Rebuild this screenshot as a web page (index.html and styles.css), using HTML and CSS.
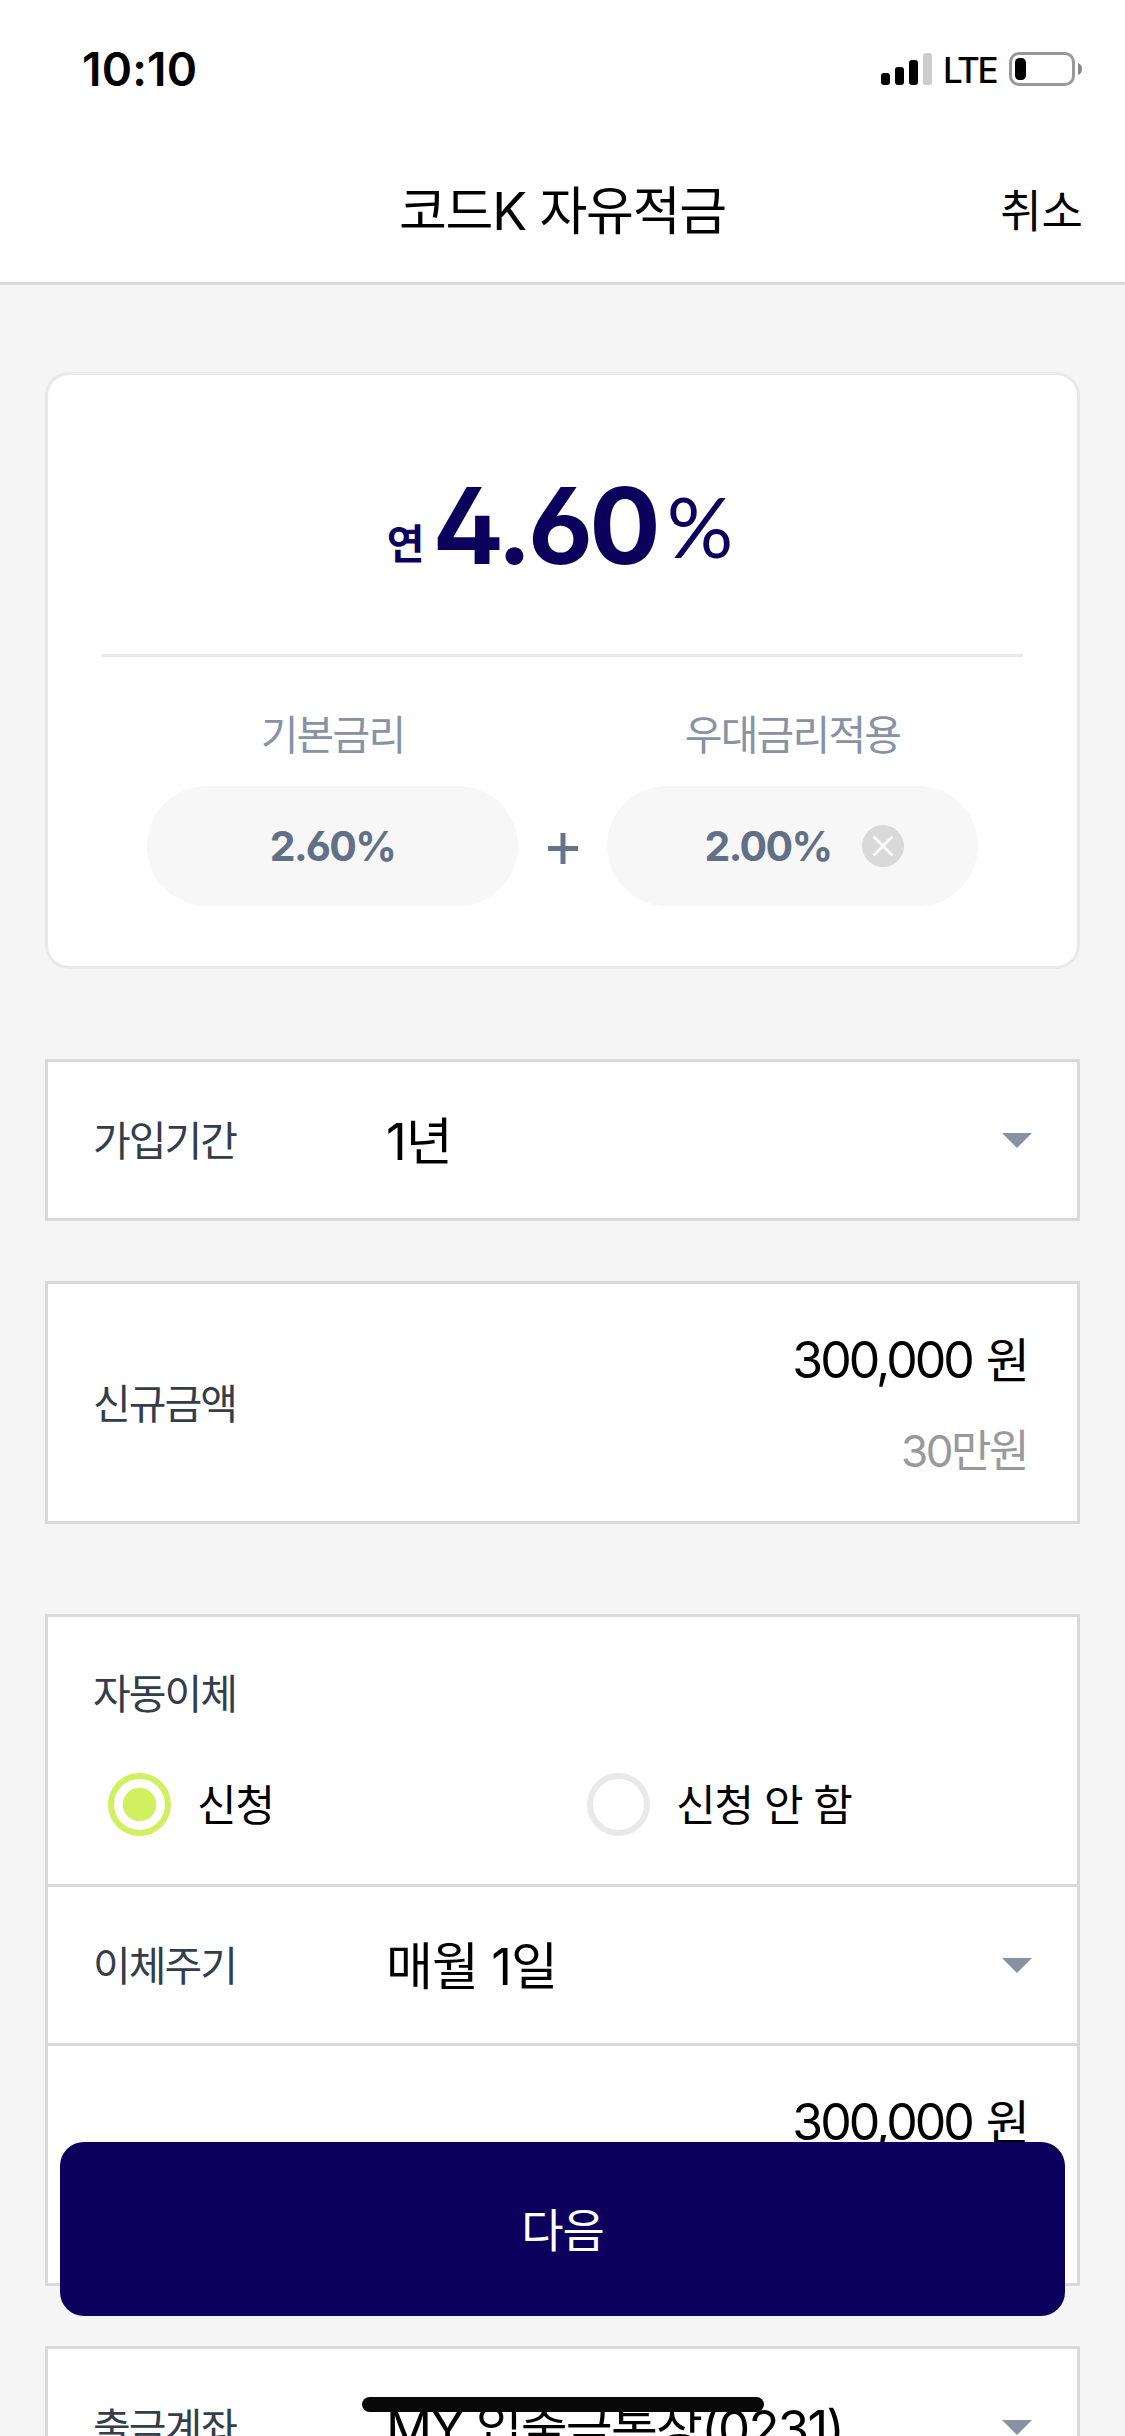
FILE: index.html
```html
<!DOCTYPE html>
<html lang="ko">
<head>
    <meta charset="UTF-8">
    <meta name="viewport" content="width=device-width, initial-scale=1.0">
    <title>코드K 자유적금</title>
    <link rel="stylesheet" href="styles.css">
</head>
<body>
    <div class="status-bar">
        <span class="time">10:10</span>
        <div class="status-icons">
            <svg class="signal" width="51" height="32" viewBox="0 0 51 32">
                <rect x="0" y="20" width="9" height="12" rx="3"/>
                <rect x="14" y="14" width="9" height="18" rx="3"/>
                <rect x="28" y="7" width="9" height="25" rx="3"/>
                <rect x="42" y="0" width="9" height="32" rx="3" fill="#ccc"/>
            </svg>
            <span class="network">LTE</span>
            <svg class="battery" width="74" height="34" viewBox="0 0 74 34">
                <rect x="1.5" y="1.5" width="63" height="31" rx="8.5" fill="none" stroke="#999" stroke-width="3"/>
                <rect x="6" y="6" width="11" height="22" rx="4.5"/>
                <path d="M69 11 Q73 12.5 73 17 Q73 21.5 69 23 Z" fill="#888"/>
            </svg>
        </div>
    </div>

    <header class="header">
        <h1>코드K 자유적금</h1>
        <button class="cancel">취소</button>
    </header>

    <main class="content">
        <section class="rate-card">
            <div class="total-rate">
                <span class="year">연</span>
                <span class="number">4.60</span>
                <span class="percent">%</span>
            </div>
            <div class="rate-detail">
                <div class="rate-item">
                    <span class="rate-label">기본금리</span>
                    <div class="pill">2.60%</div>
                </div>
                <svg class="plus" width="30" height="31" viewBox="0 0 30 31">
                    <path d="M15 0 V31 M0 15.5 H30" stroke="#64748b" stroke-width="5"/>
                </svg>
                <div class="rate-item">
                    <span class="rate-label">우대금리적용</span>
                    <div class="pill removable">2.00%
                        <svg class="remove" width="42" height="42" viewBox="0 0 42 42">
                            <circle cx="21" cy="21" r="21" fill="#d9d9d9"/>
                            <path d="M11.5 11.5 L30.5 30.5 M30.5 11.5 L11.5 30.5" stroke="#fff" stroke-width="2.6"/>
                        </svg>
                    </div>
                </div>
            </div>
        </section>

        <section class="box period">
            <div class="row select">
                <span class="label">가입기간</span>
                <span class="value">1년</span>
                <span class="arrow"></span>
            </div>
        </section>

        <section class="box amount-box">
            <div class="row amount">
                <span class="label">신규금액</span>
                <div class="money">
                    <span class="won">300,000 <b>원</b></span>
                    <span class="hangul">30만원</span>
                </div>
            </div>
        </section>

        <section class="box transfer">
            <div class="row auto">
                <span class="label">자동이체</span>
                <div class="radios">
                    <label class="radio"><i class="circle checked"></i><span>신청</span></label>
                    <label class="radio"><i class="circle"></i><span>신청 안 함</span></label>
                </div>
            </div>
            <div class="row select">
                <span class="label">이체주기</span>
                <span class="value">매월 1일</span>
                <span class="arrow"></span>
            </div>
            <div class="row amount">
                <span class="label"></span>
                <div class="money">
                    <span class="won">300,000 <b>원</b></span>
                    <span class="hangul">30만원</span>
                </div>
            </div>
        </section>

        <section class="box account">
            <div class="row select">
                <span class="label">출금계좌</span>
                <span class="value">MY 입출금통장(0231)</span>
                <span class="arrow"></span>
            </div>
        </section>
    </main>

    <button class="next">다음</button>
    <div class="home-indicator"></div>
</body>
</html>
```

FILE: styles.css
```css
* {
    box-sizing: border-box;
}

body {
    margin: 0;
    height: 2436px;
    overflow: hidden;
    background-color: #f5f5f5;
    color: #000;
    font-family: 'Inter', 'Noto Sans CJK KR', sans-serif;
    display: flex;
    flex-direction: column;
}

button {
    border: none;
    background: none;
    padding: 0;
    font-family: inherit;
    color: inherit;
}

/* status bar */
.status-bar {
    flex: none;
    height: 132px;
    padding: 6px 42px 0 82px;
    background-color: #fff;
    display: flex;
    justify-content: space-between;
    align-items: center;
}

.time {
    font-size: 46px;
    font-weight: 600;
    letter-spacing: 0.2px;
}

.status-icons {
    display: flex;
    align-items: center;
}

.network {
    font-size: 35px;
    font-weight: 500;
    line-height: 34px;
    letter-spacing: -2.5px;
    margin: 2px 13px 0 11px;
}

/* header */
.header {
    flex: none;
    height: 153px;
    padding: 0 42px;
    background-color: #fff;
    border-bottom: 3px solid #d9d9d9;
    display: grid;
    grid-template-columns: 1fr auto 1fr;
    align-items: center;
}

h1 {
    grid-column: 2;
    margin: 0;
    font-size: 52px;
    font-weight: 400;
    letter-spacing: -1.2px;
}

.cancel {
    justify-self: end;
    padding-top: 2px;
    font-size: 45px;
}

.content {
    flex: none;
    padding: 87px 45px 0;
}

/* interest rate */
.rate-card {
    height: 597px;
    padding: 0 54px;
    background-color: #fff;
    border: 3px solid #e9e9e9;
    border-radius: 24px;
}

.total-rate {
    height: 282px;
    padding: 86px 5px 0 0;
    border-bottom: 3px solid #e9e9e9;
    color: #0d005c;
    display: flex;
    justify-content: center;
    line-height: 130px;
}

.year {
    font-size: 41px;
    font-weight: 700;
    padding-top: 18px;
}

.number {
    font-size: 106px;
    font-weight: 700;
    letter-spacing: -4px;
    font-feature-settings: 'ss01';
    margin: 0 10px 0 8px;
}

.percent {
    font-family: 'Lato', sans-serif;
    font-size: 83px;
}

.rate-detail {
    padding: 48px 45px 0;
    display: flex;
    justify-content: space-between;
    align-items: flex-end;
}

.rate-item {
    width: 371px;
    text-align: center;
}

.rate-label {
    display: block;
    height: 81px;
    line-height: 60px;
    font-size: 41px;
    letter-spacing: -1.8px;
    color: #8792a5;
}

.pill {
    height: 120px;
    border-radius: 60px;
    background-color: #f7f7f7;
    color: #627087;
    font-size: 41px;
    font-weight: 700;
    letter-spacing: -1.7px;
    font-feature-settings: 'ss01';
    display: flex;
    justify-content: center;
    align-items: center;
}

.removable {
    padding-left: 24px;
}

.remove {
    margin-left: 31px;
}

.plus {
    margin-bottom: 42px;
}

/* form */
.box {
    background-color: #fff;
    border: 3px solid #d9d9d9;
}

.period {
    margin-top: 90px;
}

.amount-box {
    margin-top: 60px;
}

.transfer {
    margin-top: 90px;
}

.account {
    margin-top: 60px;
}

.row {
    padding: 0 45px;
    display: flex;
    align-items: center;
}

.row + .row {
    border-top: 3px solid #d9d9d9;
}

.select {
    height: 156px;
}

.row + .select {
    height: 159px;
}

.label {
    width: 293px;
    padding-bottom: 4px;
    font-size: 41px;
    letter-spacing: -2px;
    color: #343d4a;
}

.value {
    flex: 1;
    padding-bottom: 5px;
    font-size: 51px;
    letter-spacing: -1px;
}

.account .value {
    letter-spacing: -1.8px;
}

.arrow {
    border: 15px solid transparent;
    border-top-color: #8792a5;
    border-bottom: none;
}

.amount {
    height: 237px;
    padding-right: 50px;
}

.row + .amount {
    height: 240px;
}

.money {
    flex: 1;
    padding-top: 6px;
    display: flex;
    flex-direction: column;
    align-items: flex-end;
}

.won {
    font-size: 50px;
    line-height: 90px;
    letter-spacing: -3px;
}

.won b {
    font-size: 48px;
    font-weight: 400;
    margin-left: 3px;
}

.hangul {
    font-size: 44px;
    line-height: 90px;
    letter-spacing: -2.5px;
    color: #999;
}

.auto {
    height: 267px;
    flex-direction: column;
    align-items: flex-start;
    padding-top: 47px;
}

.auto .label {
    padding-bottom: 0;
    line-height: 60px;
}

.radios {
    width: 100%;
    margin-top: 49px;
    padding-left: 15px;
    display: grid;
    grid-template-columns: 479px 1fr;
}

.radio {
    display: flex;
    align-items: center;
    height: 63px;
    font-size: 43px;
    letter-spacing: -1.1px;
}

.radio span {
    padding-bottom: 6px;
}

.circle {
    width: 63px;
    height: 63px;
    margin-right: 26px;
    border: 6px solid #e9e9e9;
    border-radius: 50%;
}

.checked {
    border-color: #d0f060;
    background: radial-gradient(circle, #d0f060 16.2px, #fff 17.2px);
}

/* fixed at the bottom, over the form */
.next {
    position: fixed;
    left: 60px;
    right: 60px;
    bottom: 120px;
    height: 174px;
    padding-bottom: 4px;
    border-radius: 24px;
    background-color: #0d005c;
    color: #fff;
    font-size: 46px;
    letter-spacing: -1px;
}

.home-indicator {
    position: fixed;
    left: 362px;
    bottom: 24px;
    width: 402px;
    height: 15px;
    border-radius: 8px;
    background-color: #080808;
}
```
